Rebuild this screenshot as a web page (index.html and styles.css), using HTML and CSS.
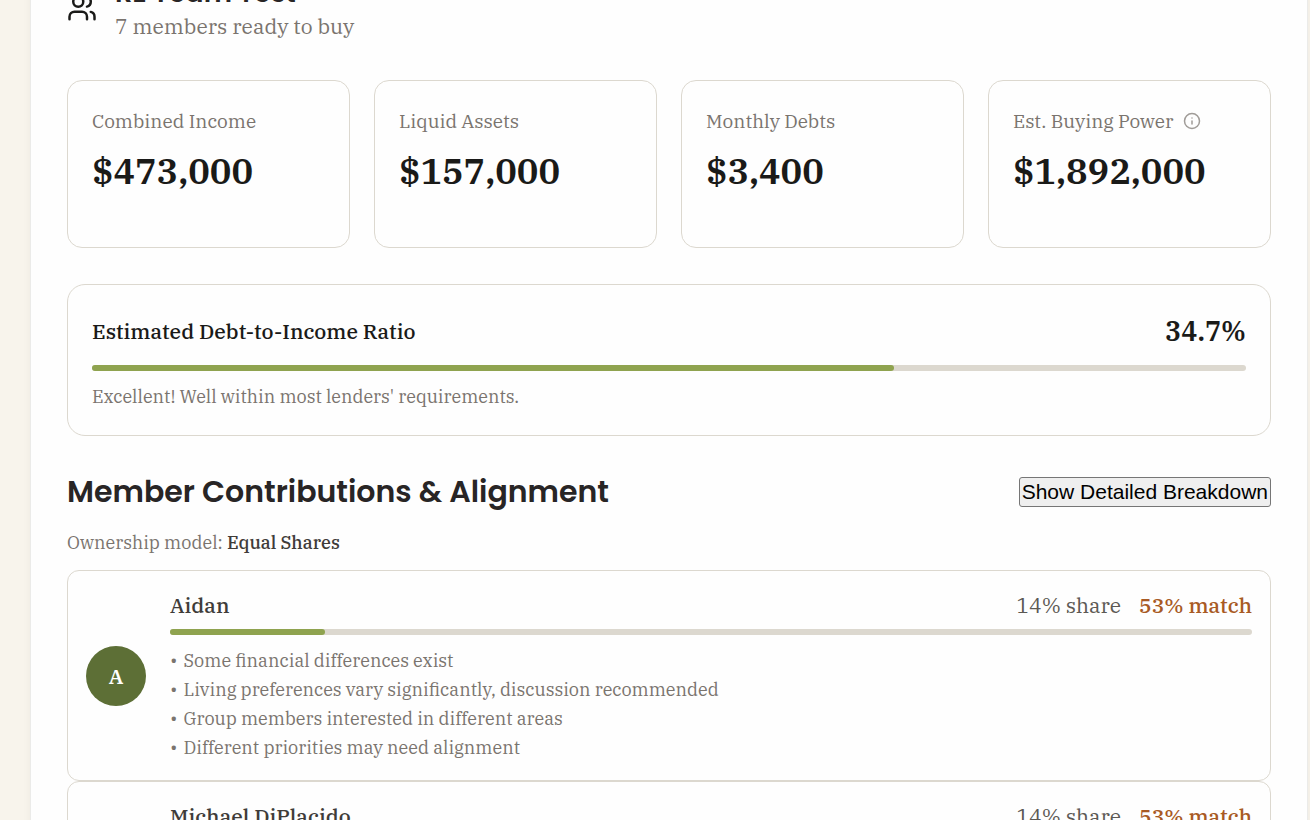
FILE: index.html
```
<!DOCTYPE html>
<html lang="en">
<head>
    <meta charset="UTF-8">
    <meta name="viewport" content="width=device-width, initial-scale=1.0">
    <title>RE Team Test</title>
    <link rel="stylesheet" href="styles.css">
</head>
<body>
    <main class="panel">
        <header class="team">
            <svg class="team-icon" viewBox="0 0 24 24" aria-hidden="true">
                <path d="M16 21v-2a4 4 0 0 0-4-4H6a4 4 0 0 0-4 4v2"/>
                <circle cx="9" cy="7" r="4"/>
                <path d="M22 21v-2a4 4 0 0 0-3-3.87"/>
                <path d="M16 3.13a4 4 0 0 1 0 7.75"/>
            </svg>
            <div>
                <h1 class="team-name">RE Team Test</h1>
                <p class="team-status">7 members ready to buy</p>
            </div>
        </header>

        <section class="stats">
            <div class="stat">
                <p class="stat-label">Combined Income</p>
                <p class="stat-value">$473,000</p>
            </div>
            <div class="stat">
                <p class="stat-label">Liquid Assets</p>
                <p class="stat-value">$157,000</p>
            </div>
            <div class="stat">
                <p class="stat-label">Monthly Debts</p>
                <p class="stat-value">$3,400</p>
            </div>
            <div class="stat">
                <p class="stat-label">Est. Buying Power
                    <svg class="info-icon" viewBox="0 0 24 24" aria-hidden="true">
                        <circle cx="12" cy="12" r="10"/>
                        <path d="M12 16v-4M12 8h.01"/>
                    </svg>
                </p>
                <p class="stat-value">$1,892,000</p>
            </div>
        </section>

        <section class="ratio">
            <div class="ratio-head">
                <h2 class="ratio-title">Estimated Debt-to-Income Ratio</h2>
                <span class="ratio-value">34.7%</span>
            </div>
            <div class="bar"><div class="bar-fill" style="width: 69.5%"></div></div>
            <p class="ratio-note">Excellent! Well within most lenders' requirements.</p>
        </section>

        <section>
            <div class="members-head">
                <h2 class="members-title">Member Contributions &amp; Alignment</h2>
                <button type="button" class="breakdown-btn">Show Detailed Breakdown</button>
            </div>
            <p class="model">Ownership model: <span class="model-name">Equal Shares</span></p>

            <article class="member">
                <div class="avatar">A</div>
                <div class="member-body">
                    <div class="member-head">
                        <h3 class="member-name">Aidan</h3>
                        <span class="share">14% share</span>
                        <span class="match">53% match</span>
                    </div>
                    <div class="bar"><div class="bar-fill" style="width: 14.3%"></div></div>
                    <ul class="notes">
                        <li>Some financial differences exist</li>
                        <li>Living preferences vary significantly, discussion recommended</li>
                        <li>Group members interested in different areas</li>
                        <li>Different priorities may need alignment</li>
                    </ul>
                </div>
            </article>

            <article class="member">
                <div class="avatar">M</div>
                <div class="member-body">
                    <div class="member-head">
                        <h3 class="member-name">Michael DiPlacido</h3>
                        <span class="share">14% share</span>
                        <span class="match">53% match</span>
                    </div>
                    <div class="bar"><div class="bar-fill" style="width: 14.3%"></div></div>
                    <ul class="notes">
                        <li>Some financial differences exist</li>
                        <li>Living preferences vary significantly, discussion recommended</li>
                        <li>Group members interested in different areas</li>
                        <li>Different priorities may need alignment</li>
                    </ul>
                </div>
            </article>
        </section>
    </main>
</body>
</html>
```
FILE: styles.css
```
* {
    box-sizing: border-box;
    margin: 0;
    padding: 0;
}
body {
    font-family: "IBM Plex Serif", "DejaVu Serif Condensed", "DejaVu Serif", serif;
    background-color: #f8f4ec;
    color: #1a1a18;
    overflow: hidden;
}
.panel {
    margin: -62px 2px 0 30px;
    padding: 36px;
    background-color: #fefefe;
    border: 1px solid #ebebe9;
    box-shadow: 0 2px 8px rgba(0, 0, 0, 0.05);
}
.team {
    display: flex;
    align-items: center;
    gap: 18px;
    margin-bottom: 39px;
}
.team-icon {
    width: 30px;
    height: 30px;
    fill: none;
    stroke: #1a1a18;
    stroke-width: 2;
    stroke-linecap: round;
    stroke-linejoin: round;
}
.team-name,
.members-title {
    font-family: Poppins, Inter, sans-serif;
    font-weight: 600;
    color: #282525;
}
.team-name {
    font-size: 27px;
    line-height: 36px;
}
.team-status {
    font-size: 21px;
    line-height: 30px;
    color: #7a746e;
}
.stats {
    display: grid;
    grid-template-columns: repeat(4, 1fr);
    gap: 24px;
    margin-bottom: 36px;
}
.stat {
    height: 168px;
    padding: 24px;
    border: 1px solid #dcd8cf;
    border-radius: 15px;
}
.stat-label {
    display: flex;
    align-items: center;
    gap: 10px;
    font-size: 19px;
    line-height: 32px;
    color: #7a746e;
}
.info-icon {
    width: 18px;
    height: 18px;
    fill: none;
    stroke: #a09c98;
    stroke-width: 2;
    stroke-linecap: round;
}
.stat-value {
    margin-top: 7px;
    font-size: 36px;
    font-weight: 600;
    line-height: 54px;
}
.ratio {
    margin-bottom: 36px;
    padding: 24px;
    border: 1px solid #dcd8cf;
    border-radius: 18px;
}
.ratio-head,
.members-head {
    display: flex;
    justify-content: space-between;
    align-items: center;
}
.ratio-title {
    font-size: 21px;
    font-weight: 500;
    line-height: 32px;
}
.ratio-value {
    font-size: 27px;
    font-weight: 600;
    line-height: 44px;
}
.bar {
    height: 6px;
    margin-top: 12px;
    background-color: #dcd8cf;
    border-radius: 3px;
}
.bar-fill {
    height: 6px;
    background-color: #8fa34f;
    border-radius: 3px;
}
.ratio-note,
.model {
    font-size: 18px;
    line-height: 28px;
    color: #7a746e;
}
.ratio-note {
    margin-top: 12px;
}
.members-title {
    font-size: 30px;
    line-height: 40px;
}
.breakdown-btn {
    padding: 1px 2px;
    font-family: "Liberation Sans", Arial, sans-serif;
    font-size: 21px;
    line-height: 26px;
    color: #000;
    background-color: #efefef;
    border: 1px solid #767676;
    border-radius: 3px;
}
.model {
    margin: 17px 0 13px;
}
.model-name {
    font-weight: 500;
    color: #3f3c39;
}
.member {
    display: flex;
    align-items: center;
    gap: 24px;
    padding: 18px;
    border: 1px solid #dcd8cf;
    border-radius: 12px;
}
.avatar {
    flex: none;
    display: flex;
    justify-content: center;
    align-items: center;
    width: 60px;
    height: 60px;
    border-radius: 50%;
    background-color: #5d6f36;
    color: #fff;
    font-size: 21px;
    font-weight: 600;
}
.member-body {
    flex: 1;
}
.member-head {
    display: flex;
    gap: 18px;
    font-size: 21px;
    line-height: 32px;
}
.member-name {
    margin-right: auto;
    font-size: 21px;
    font-weight: 500;
    color: #3f3c39;
}
.share {
    color: #5c5954;
}
.match {
    font-weight: 500;
    color: #a85a24;
}
.member .bar {
    margin-top: 8px;
}
.notes {
    margin-top: 11px;
    list-style: none;
    font-size: 18px;
    line-height: 29px;
    color: #7a746e;
}
.notes li::before {
    content: "•";
    margin-right: 6px;
}
```
